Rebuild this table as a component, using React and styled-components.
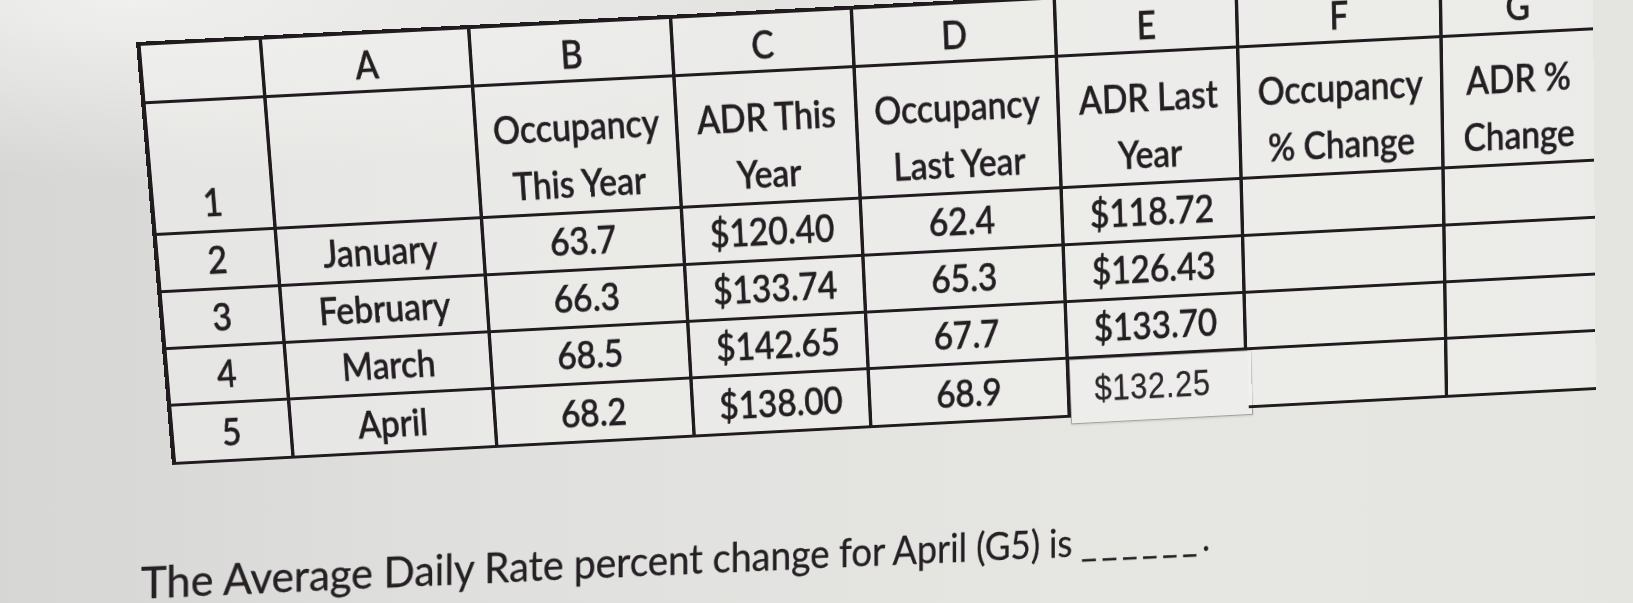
import React, { useLayoutEffect, useRef, useState } from "react";
import styled, { createGlobalStyle } from "styled-components";

// ─── Photo geometry ───
// The sheet is laid out flat, then mapped onto the photographed (tilted) screen.

const K = 0.87; // horizontal foreshortening of the screen in the photo
const LINE = "#1f1b1e";
const INK = "#221e22";

const COLS = [121, 208, 202, 181, 204, 183, 205, 152].map((w) => Math.round(w / K));
const ROWS = [58, 132, 58, 58, 58, 60];
const BORDER = 4;
const SHEET_W = COLS.reduce((a, b) => a + b, 0) + BORDER;
const SHEET_H = ROWS.reduce((a, b) => a + b, 0) + BORDER;

const SHEET_QUAD = [
  [136, 42],
  [1592, -32],
  [1595, 390],
  [172, 465],
];

const CAP_FONT = 44;
const CAPTION_QUAD = [
  [141, 568],
  [1210, 524],
  [1210, 551],
  [141, 599],
];

function homography(src, dst) {
  const A = [];
  const b = [];
  for (let i = 0; i < 4; i++) {
    const [x, y] = src[i];
    const [u, v] = dst[i];
    A.push([x, y, 1, 0, 0, 0, -x * u, -y * u]);
    b.push(u);
    A.push([0, 0, 0, x, y, 1, -x * v, -y * v]);
    b.push(v);
  }
  for (let c = 0; c < 8; c++) {
    let p = c;
    for (let r = c + 1; r < 8; r++) if (Math.abs(A[r][c]) > Math.abs(A[p][c])) p = r;
    [A[c], A[p]] = [A[p], A[c]];
    [b[c], b[p]] = [b[p], b[c]];
    for (let r = 0; r < 8; r++) {
      if (r === c) continue;
      const f = A[r][c] / A[c][c];
      for (let j = c; j < 8; j++) A[r][j] -= f * A[c][j];
      b[r] -= f * b[c];
    }
  }
  const [a, bb, c, d, e, f, g, h] = b.map((val, i) => val / A[i][i]);
  return `matrix3d(${a},${d},0,${g},${bb},${e},0,${h},0,0,1,0,${c},${f},0,1)`;
}

const SHEET_MATRIX = homography(
  [
    [0, 0],
    [SHEET_W, 0],
    [SHEET_W, SHEET_H],
    [0, SHEET_H],
  ],
  SHEET_QUAD
);

// ─── Data ───

const LETTERS = ["", "A", "B", "C", "D", "E", "F", "G"];
const TITLES = [
  ["1"],
  [],
  ["Occupancy", "This Year"],
  ["ADR This", "Year"],
  ["Occupancy", "Last Year"],
  ["ADR Last", "Year"],
  ["Occupancy", "% Change"],
  ["ADR %", "Change"],
];
const DATA = [
  ["2", "January", "63.7", "$120.40", "62.4", "$118.72", "", ""],
  ["3", "February", "66.3", "$133.74", "65.3", "$126.43", "", ""],
  ["4", "March", "68.5", "$142.65", "67.7", "$133.70", "", ""],
  ["5", "April", "68.2", "$138.00", "68.9", "$132.25", "", ""],
];

// ─── Styled Components ───

const GlobalStyle = createGlobalStyle`
  html, body {
    margin: 0;
    padding: 0;
    background: #dedfdc;
    overflow: hidden;
  }
`;

const Page = styled.div`
  position: relative;
  width: 1633px;
  height: 603px;
  overflow: hidden;
  display: flex;
  flex-direction: column;
  align-items: flex-start;
  background:
    radial-gradient(ellipse 40% 30% at 8% 0%, rgba(246, 246, 244, 0.8), transparent),
    linear-gradient(90deg, #d6d7d4 0%, #e0e1de 30%, #e6e6e3 70%, #e4e4e1 100%);
  font-family: Lato, "Open Sans", sans-serif;
  color: ${INK};
`;

const Sheet = styled.div`
  flex: none;
  display: grid;
  grid-template-columns: ${COLS.map((w) => `${w}px`).join(" ")};
  grid-template-rows: ${ROWS.map((h) => `${h}px`).join(" ")};
  width: ${SHEET_W - BORDER}px;
  height: ${SHEET_H - BORDER}px;
  border-top: ${BORDER}px solid ${LINE};
  border-left: ${BORDER + 1}px solid ${LINE};
  transform-origin: 0 0;
  transform: ${SHEET_MATRIX};
  font-size: 39px;
  font-weight: 500;
  -webkit-text-stroke: 0.6px ${INK};
`;

const Cell = styled.div`
  position: relative;
  min-width: 0;
  display: flex;
  flex-direction: column;
  justify-content: flex-end;
  align-items: center;
  white-space: nowrap;
  line-height: ${({ $lh }) => $lh}px;
  padding-bottom: ${({ $pad }) => $pad}px;
  border-right: ${({ $open }) => ($open ? "none" : `4.5px solid ${LINE}`)};
  border-bottom: ${({ $flat }) => ($flat ? "none" : `3.5px solid ${LINE}`)};
  background: rgba(244, 244, 242, 0.45);
`;

const EditBox = styled.div`
  position: absolute;
  left: 0;
  top: 0;
  right: -5px;
  bottom: -7px;
  display: flex;
  align-items: flex-end;
  padding: 0 0 14px 28px;
  border: 1.5px solid #a2a2a0;
  background: #ededeb;
  box-shadow: 0 1px 2px rgba(0, 0, 0, 0.12);
  font-family: "Liberation Sans", Arial, sans-serif;
  font-weight: 400;
  font-size: 36px;
  letter-spacing: 1px;
  line-height: 40px;
  color: #2a262a;
  -webkit-text-stroke: 0.3px #2a262a;
`;

const CaptionLine = styled.div`
  flex: none;
  white-space: nowrap;
  font-size: ${CAP_FONT}px;
  line-height: 1.2;
  color: #242024;
  -webkit-text-stroke: 0.3px #242024;
  transform-origin: 0 0;
`;

const Blank = styled.span`
  letter-spacing: 6px;
`;

// ─── Components ───

const Caption = () => {
  const ref = useRef(null);
  const [matrix, setMatrix] = useState("none");

  useLayoutEffect(() => {
    const el = ref.current;
    const place = () => {
      const w = el.offsetWidth;
      const top = CAP_FONT * 0.27;
      const base = CAP_FONT * 0.987;
      const src = [
        [0, top],
        [w, top],
        [w, base],
        [0, base],
      ];
      const dst = CAPTION_QUAD.map(([x, y]) => [x - el.offsetLeft, y - el.offsetTop]);
      setMatrix(homography(src, dst));
    };
    place();
    if (document.fonts) document.fonts.ready.then(place);
  }, []);

  return (
    <CaptionLine ref={ref} style={{ transform: matrix }}>
      The Average Daily Rate percent change for April (G5) is <Blank>______</Blank>.
    </CaptionLine>
  );
};

const App = () => (
  <Page>
    <GlobalStyle />
    <Sheet>
      {LETTERS.map((l, i) => (
        <Cell key={`h${i}`} $lh={46} $pad={3} $open={i === 7}>
          {l}
        </Cell>
      ))}
      {TITLES.map((lines, i) => (
        <Cell key={`t${i}`} $lh={57} $pad={0} $open={i === 7}>
          {lines.map((t) => (
            <span key={t}>{t}</span>
          ))}
        </Cell>
      ))}
      {DATA.map((row, r) =>
        row.map((v, i) => {
          const editing = r === 3 && i === 5;
          return (
            <Cell
              key={`${r}-${i}`}
              $lh={46}
              $pad={6}
              $open={i === 7 || editing}
              $flat={editing}
            >
              {editing ? <EditBox>{v}</EditBox> : v}
            </Cell>
          );
        })
      )}
    </Sheet>
    <Caption />
  </Page>
);

export default App;
